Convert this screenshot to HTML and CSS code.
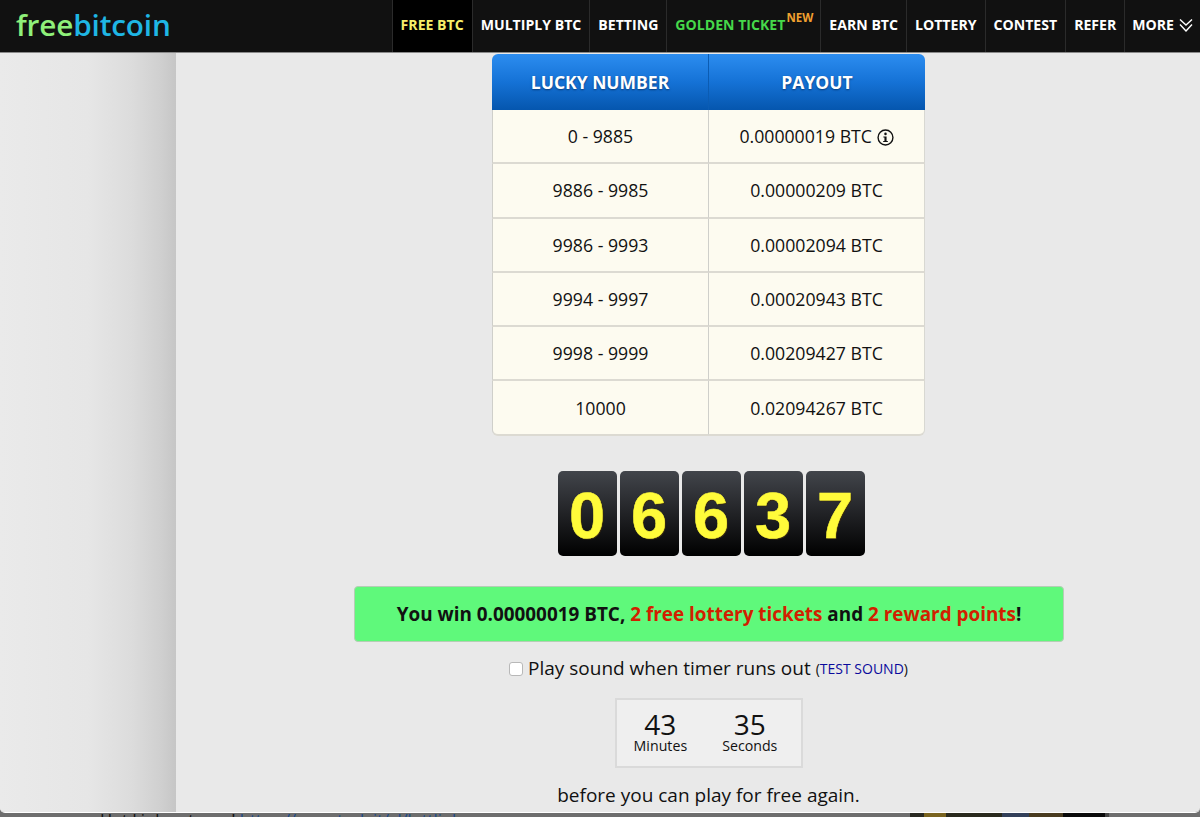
FILE: index.html
```html
<!DOCTYPE html>
<html lang="en">
<head>
<meta charset="utf-8">
<title>freebitcoin</title>
<link rel="stylesheet" href="styles.css">
</head>
<body>
<div class="window">
  <header class="topbar">
    <a class="logo"><span class="logo-free">free</span><span class="logo-bitcoin">bitcoin</span></a>
    <nav class="menu">
      <a class="item item-active">FREE BTC</a>
      <a class="item">MULTIPLY BTC</a>
      <a class="item">BETTING</a>
      <a class="item item-golden">GOLDEN TICKET<span class="new">NEW</span></a>
      <a class="item">EARN BTC</a>
      <a class="item">LOTTERY</a>
      <a class="item">CONTEST</a>
      <a class="item">REFER</a>
      <a class="item item-more">MORE
        <svg class="chevrons" viewBox="0 0 14 14" width="14" height="14" aria-hidden="true"><path d="M1 1.5 7 7l6-5.500M1 6.500 7 13l6-6.500" fill="none" stroke="#fff" stroke-width="1.4"/></svg>
      </a>
    </nav>
  </header>
  <div class="page">
    <aside class="gutter"></aside>
    <main class="content">
      <table class="payouts">
        <thead>
          <tr><th>LUCKY NUMBER</th><th>PAYOUT</th></tr>
        </thead>
        <tbody>
          <tr><td>0 - 9885</td><td>0.00000019 BTC <svg class="info" viewBox="0 0 16 16" width="17" height="17" aria-hidden="true"><circle cx="8" cy="8" r="7" fill="none" stroke="#111" stroke-width="1.3"/><circle cx="8" cy="4.600" r="1.2" fill="#111"/><path d="M6 7h3v4.200h1.200v1.100H5.800v-1.100H7V8.100H6z" fill="#111"/></svg></td></tr>
          <tr><td>9886 - 9985</td><td>0.00000209 BTC</td></tr>
          <tr><td>9986 - 9993</td><td>0.00002094 BTC</td></tr>
          <tr><td>9994 - 9997</td><td>0.00020943 BTC</td></tr>
          <tr><td>9998 - 9999</td><td>0.00209427 BTC</td></tr>
          <tr><td>10000</td><td>0.02094267 BTC</td></tr>
        </tbody>
      </table>
      <div class="digits">
        <span class="digit">0</span><span class="digit">6</span><span class="digit">6</span><span class="digit">3</span><span class="digit">7</span>
      </div>
      <div class="win">You win 0.00000019 BTC, <span class="win-red">2 free lottery tickets</span> and <span class="win-red">2 reward points</span>!</div>
      <label class="sound"><input class="sound-check" type="checkbox"><span>Play sound when timer runs out</span><span class="test">(<a class="test-link">TEST SOUND</a>)</span></label>
      <div class="timer">
        <div class="unit"><span class="amount">43</span><span class="period">Minutes</span></div>
        <div class="unit"><span class="amount">35</span><span class="period">Seconds</span></div>
      </div>
      <p class="again">before you can play for free again.</p>
    </main>
  </div>
</div>
<div class="under">
  <p class="under-text">Hot Link out now! <a class="under-link">https://omerturk.it/yl/lottlink</a></p>
  <div class="under-image"></div>
</div>
</body>
</html>
```
FILE: styles.css
```css
* { box-sizing: border-box; }
html, body { margin: 0; height: 817px; overflow: hidden; }
body {
  font-family: "Open Sans", "Liberation Sans", sans-serif;
  color: #111;
  background: #6e6e6e;
  display: flex;
  flex-direction: column;
}
.window {
  height: 813px;
  flex: none;
  display: flex;
  flex-direction: column;
  border-bottom: 1px solid #fff;
  border-radius: 0 0 5px 5px;
  overflow: hidden;
}
.topbar {
  height: 53px;
  flex: none;
  background: #111;
  border-bottom: 1px solid #8a8a8a;
  display: flex;
  justify-content: space-between;
  padding-left: 16px;
}
.logo {
  font-size: 29.7px;
  font-weight: 600;
  line-height: 50px;
  letter-spacing: -0.15px;
}
.logo-free { color: #8ff07a; }
.logo-bitcoin { color: #1fb6e4; }
.menu { display: flex; }
.item {
  display: flex;
  align-items: center;
  gap: 3px;
  height: 52px;
  padding: 0 8px 3px;
  border-left: 1px solid #2b2b2b;
  color: #fff;
  font-size: 14.1px;
  font-weight: 700;
  white-space: nowrap;
}
.item-active { background: #000; color: #f7ef6a; }
.item-golden { color: #46d84a; padding-right: 7px; }
.item-more { gap: 5px; padding: 0 7px 3px; }
.new {
  align-self: flex-start;
  margin: 10px 0 0 -2px;
  color: #f0a030;
  font-size: 11.5px;
  font-weight: 700;
}
.page { flex: 1; display: flex; background: #e9e9e9; min-height: 0; }
.gutter {
  width: 176px;
  flex: none;
  background: linear-gradient(90deg, #eaeaea 0%, #e6e6e6 50%, #dcdcdc 75%, #cfcfcf 92%, #c6c6c6 100%);
}
.content {
  flex: 1;
  display: flex;
  flex-direction: column;
  align-items: center;
  padding: 1px 0 0 41px;
}
.payouts {
  width: 433px;
  border-collapse: separate;
  border-spacing: 0;
  table-layout: fixed;
  font-size: 17.7px;
  text-align: center;
}
.payouts th {
  height: 56px;
  padding: 0;
  color: #fff;
  font-size: 17.5px;
  font-weight: 700;
  background: linear-gradient(180deg, #2c8df0 0%, #1572d6 50%, #0556ae 100%);
  text-shadow: 0 1px 2px #063a78;
  border-left: 1px solid #0b5cb3;
}
.payouts th:first-child { width: 216px; border-left: 0; border-top-left-radius: 6px; }
.payouts th:last-child { border-top-right-radius: 6px; }
.payouts td {
  height: 54.3px;
  padding: 0;
  background: #fdfbf0;
  border-bottom: 2px solid #dcdad2;
  border-left: 1px solid #cfcfca;
}
.payouts td:last-child { border-right: 1px solid #d8d8d2; }
.payouts tr:last-child td:first-child { border-bottom-left-radius: 6px; }
.payouts tr:last-child td:last-child { border-bottom-right-radius: 6px; }
.info { vertical-align: -3px; }
.digits { display: flex; gap: 3px; margin: 35px 0 0 5px; }
.digit {
  width: 59px;
  height: 85px;
  border-radius: 5px;
  background: linear-gradient(180deg, #42454b 0%, #1e1f22 55%, #000 100%);
  color: #fffb3a;
  font-family: "Liberation Sans", Arial, sans-serif;
  font-size: 65px;
  font-weight: 700;
  line-height: 89px;
  text-align: center;
  text-shadow: 1px 1px 0 #3a2a10;
  -webkit-text-stroke: 0.5px #fffb3a;
}
.win {
  width: 710px;
  height: 56px;
  margin: 30px 0 0 1px;
  background: #5ff97b;
  border: 1px solid #b5cdb5;
  border-radius: 4px;
  font-size: 18.9px;
  font-weight: 700;
  line-height: 54px;
  text-align: center;
}
.win-red { color: #d21f00; }
.sound {
  display: flex;
  align-items: center;
  margin-top: 12px;
  font-size: 19px;
  line-height: 26px;
  white-space: nowrap;
}
.sound-check {
  width: 14px;
  height: 14px;
  margin: 2px 5px 0 0;
  appearance: none;
  background: #fff;
  border: 1px solid #b8b8b8;
  border-radius: 3px;
}
.test { font-size: 14px; margin: 2px 0 0 5px; }
.test-link { color: #0a0a9c; }
.timer {
  display: flex;
  justify-content: center;
  gap: 35px;
  width: 188px;
  height: 70px;
  margin: 16px 0 0 1px;
  padding: 11px 7px 0 0;
  background: #efefef;
  border: 2px solid #dadada;
  text-align: center;
}
.unit { display: flex; flex-direction: column; align-items: center; }
.amount { font-size: 28px; line-height: 27px; }
.period { font-size: 14.2px; line-height: 16px; }
.again { margin: 14px 0 0; font-size: 19px; line-height: 26px; }
.under {
  flex: 1;
  display: flex;
  justify-content: space-between;
  padding-left: 100px;
  overflow: hidden;
}
.under-text { margin: -5px 0 0; font-size: 16.5px; line-height: 24px; white-space: nowrap; }
.under-link { color: #1a4a8a; }
.under-image {
  width: 199px;
  margin-right: 91px;
  background: linear-gradient(90deg, #2a2a22 0 7%, #7a6420 7% 18%, #2a2a1e 18% 46%, #33405a 46% 60%, #4a3c20 60% 77%, #0a0a0a 77% 98%, #444 98%);
}
```
